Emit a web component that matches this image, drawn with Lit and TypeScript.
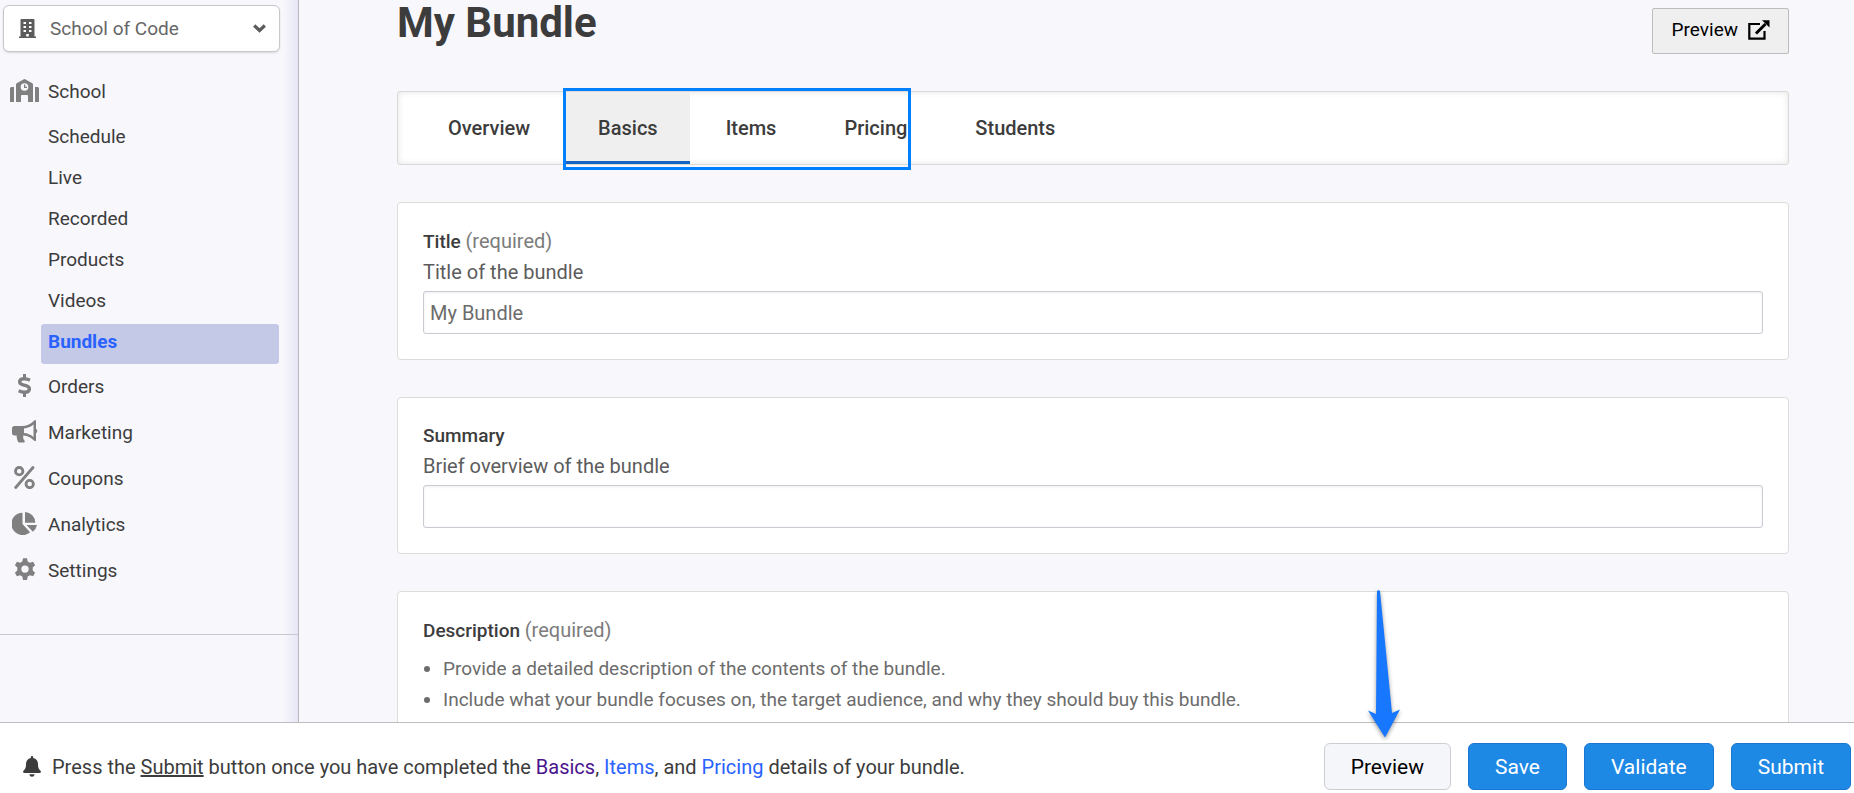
import { LitElement, html, css, svg, nothing } from "lit";
import { customElement, state } from "lit/decorators.js";
import { classMap } from "lit/directives/class-map.js";

const icons = {
  school: svg`<svg class="glyph" width="29" height="23" viewBox="0 0 29 23" fill="currentColor" aria-hidden="true">
    <path fill-rule="evenodd" d="M0 9.5Q0 8 1.500 8H4V23H0ZM25 8h2.500Q29 8 29 9.500V23H25ZM6 5.500Q6 4.800 6.700 4.300L13.400.4q1.100-.6 2.200 0L22.300 4.300q.7.500.7 1.200V23H18v-6q0-1-1-1h-5q-1 0-1 1v6H6ZM14.500 4.200a3.800 3.800 0 1 0 0 7.600 3.800 3.800 0 0 0 0-7.600ZM14 5.500h1.300v2.200H17V9H14Z"/></svg>`,
  dollar: svg`<svg class="glyph" width="15" height="23" viewBox="0 0 15 23" fill="none" stroke="currentColor" stroke-width="3.400" aria-hidden="true">
    <path d="M7.500 0v4M7.500 18.500V23" stroke-width="3"/><path d="M13 6.200C11 5.200 9.200 4.700 7.200 4.700 1.600 4.700 1.200 9.600 6 10.800l3 .8c5 1.400 4.300 6.600-1.300 6.700-2.200 0-4.200-.7-6-1.600"/></svg>`,
  bullhorn: svg`<svg class="glyph" width="26" height="23" viewBox="0 0 26 23" fill="currentColor" aria-hidden="true">
    <path fill-rule="evenodd" d="M22.500.2q1.500-.6 1.500 1V8.700a2.700 2.700 0 0 1 0 4.600V20q0 1.600-1.500 1C19 17.500 16 15.700 11.300 15.500c-.4 2.500.2 3.900 1.300 5.300.5.800-.1 1.700-1 1.700H7.200q-.9 0-1.300-.9C5 19.500 4.500 17.500 4.700 15.500H2.500Q0 15.500 0 13V8.500Q0 6 2.500 6H9.500C15 6 19 4 22.500.2ZM21.500 4.500C18.500 7 15.500 8.200 12 8.500v4.600c3.500.2 6.500 1.500 9.500 3.900Z"/></svg>`,
  percent: svg`<svg class="glyph" width="21" height="23" viewBox="0 0 21 23" fill="none" stroke="currentColor" stroke-width="2.800" stroke-linecap="round" aria-hidden="true">
    <path d="M19 1.500 1.700 21.500"/><circle cx="5.200" cy="5.200" r="3.700"/><circle cx="15.700" cy="18" r="3.700"/></svg>`,
  pie: svg`<svg class="glyph" width="26" height="23" viewBox="0 0 26 23" fill="currentColor" aria-hidden="true">
    <path d="M10.500.7V12l7.600 8.200A11.200 11.200 0 1 1 10.500.7ZM13 0A10.800 10.800 0 0 1 23.300 10.800H13ZM14.500 13H25a10.500 10.500 0 0 1-4.200 6.700Z"/></svg>`,
  gear: svg`<svg class="glyph" width="22" height="23" viewBox="0 0 22 23" fill="currentColor" aria-hidden="true">
    <path fill-rule="evenodd" d="M9 .3h4l.7 3.200 2.200 1.300 3.200-1.100 2 3.500-2.400 2.200v3.200l2.400 2.200-2 3.500-3.200-1.100-2.200 1.300-.7 3.500H9l-.7-3.500-2.200-1.300-3.200 1.100-2-3.500 2.400-2.200V9.400L.9 7.200l2-3.500 3.200 1.100 2.200-1.300ZM11 7.400a3.700 3.700 0 1 0 0 7.400 3.700 3.700 0 0 0 0-7.400Z"/></svg>`,
  building: svg`<svg width="17" height="19" viewBox="0 0 17 19" fill="currentColor" aria-hidden="true">
    <path fill-rule="evenodd" d="M1.500 1Q1.500 0 2.500 0h12q1 0 1 1V17.500H17V19H0V17.500H1.500ZM4.500 3v2h2.500V3ZM10 3v2h2.500V3ZM4.500 7v2h2.500V7ZM10 7v2h2.500V7ZM4.500 11v2h2.500v-2ZM10 11v2h2.500v-2ZM7.200 15v2.500h2.600V15Z"/></svg>`,
  chevron: svg`<svg width="13" height="9" viewBox="0 0 13 9" fill="none" stroke="currentColor" stroke-width="3.200" aria-hidden="true">
    <path d="M1.200 1.500 6.500 6.500 11.800 1.500"/></svg>`,
  external: svg`<svg width="22" height="20" viewBox="0 0 22 20" fill="none" stroke="currentColor" stroke-width="2.200" aria-hidden="true">
    <path d="M12 4H1.300V18.600H16.500V11"/><path d="M8 13.500 17.500 4" stroke-width="3"/><path d="M14 .3h7.500v7.200Z" fill="currentColor" stroke="none"/></svg>`,
  bell: svg`<svg width="18" height="21" viewBox="0 0 18 21" fill="currentColor" aria-hidden="true">
    <path d="M9 0q1.200 0 1.200 1.200v.7C13.500 2.500 15 5 15 8c0 4 .9 5.200 2.500 6.800.9.900.4 2.200-.8 2.200H1.300C.1 17-.4 15.700.5 14.800 2.100 13.200 3 12 3 8c0-3 1.500-5.500 4.800-6.100v-.7Q7.800 0 9 0ZM6.300 18.200h5.400Q11.300 20.700 9 20.700T6.300 18.200Z"/></svg>`,
};

const subItems = ["Schedule", "Live", "Recorded", "Products", "Videos", "Bundles"];
const sections: [string, unknown][] = [
  ["Orders", icons.dollar],
  ["Marketing", icons.bullhorn],
  ["Coupons", icons.percent],
  ["Analytics", icons.pie],
  ["Settings", icons.gear],
];

@customElement("side-nav")
export class SideNav extends LitElement {
  static styles = css`
    :host {
      display: block;
      box-sizing: border-box;
      border-right: 1px solid #b8b8bc;
      background: linear-gradient(to left, #e6e6f6, #f8f7fc 15px);
      color: #3c3c3c;
    }
    .account {
      display: flex;
      align-items: center;
      box-sizing: border-box;
      height: 47px;
      margin: 5px 18px 17px 3px;
      padding: 0 13px 0 15px;
      gap: 14px;
      border: 1px solid #c8c8cc;
      border-radius: 6px;
      background: #fff;
      color: #5c5c5c;
      box-shadow: 0 1px 2px #0002;
    }
    .account select {
      flex: 1;
      min-width: 0;
      appearance: none;
      border: 0;
      padding: 0;
      background: none;
      font: inherit;
      line-height: 24px;
      color: #666;
    }
    .row, .sub {
      display: flex;
      box-sizing: border-box;
      color: inherit;
      text-decoration: none;
    }
    .row { align-items: center; height: 46px; padding-left: 8px; gap: 7px; }
    .slot { display: flex; justify-content: center; width: 33px; padding-bottom: 4px; color: #808080; }
    .subs { display: grid; gap: 1px; margin: 4px 19px 0 41px; }
    .sub { align-items: center; height: 40px; padding: 0 7px 4px; border-radius: 3px; }
    .active { background: #c5c9e8; color: #2962ff; font-weight: 700; }
    .rule { border: 0; border-top: 1px solid #c8c8d0; margin: 40px 0 0; }
  `;

  private row(name: string, icon: unknown) {
    return html`<a class="row" href="#${name.toLowerCase()}"><span class="slot">${icon}</span>${name}</a>`;
  }

  render() {
    return html`
      <div class="account">
        ${icons.building}
        <select aria-label="Account"><option>School of Code</option></select>
        ${icons.chevron}
      </div>
      <nav>
        ${this.row("School", icons.school)}
        <div class="subs">
          ${subItems.map((name) => html`<a class=${classMap({ sub: true, active: name === "Bundles" })} href="#${name.toLowerCase()}">${name}</a>`)}
        </div>
        ${sections.map(([name, icon]) => this.row(name, icon))}
      </nav>
      <hr class="rule" />
    `;
  }
}

@customElement("app-root")
export class AppRoot extends LitElement {
  @state() private tab = "Basics";

  static styles = css`
    :host {
      display: grid;
      grid-template-rows: minmax(0, 1fr) auto;
      height: 100vh;
      overflow: hidden;
      background: #f8f7fc;
      color: #3c3c3c;
      font: 400 19px/30px Roboto, sans-serif;
    }
    button, input { font: inherit; }
    .body { display: grid; grid-template-columns: 299px minmax(0, 1fr); overflow: hidden; }
    .main { display: flex; flex-direction: column; padding: 0 65px 0 98px; gap: 37px; overflow: hidden; }
    .head { display: flex; justify-content: space-between; align-items: flex-end; flex: none; height: 54px; }
    .title { margin: 0; align-self: flex-start; font-size: 42px; line-height: 46px; font-weight: 700; }
    .open {
      display: flex;
      align-items: center;
      box-sizing: border-box;
      height: 46px;
      gap: 10px;
      padding: 0 18px 2px 19px;
      border: 1px solid #bcbcbc;
      border-radius: 2px;
      background: #efefef;
      color: #000;
    }
    .tabs {
      position: relative;
      display: flex;
      box-sizing: border-box;
      flex: none;
      height: 74px;
      padding: 0 18px;
      gap: 4px;
      border: 1px solid #d9dad6;
      border-radius: 3px;
      background: #fff;
      box-shadow: inset 0 0 6px #0000001c;
    }
    .tab {
      padding: 3px 32px 0;
      border: 0;
      border-bottom: 3px solid transparent;
      background: none;
      color: inherit;
      font-size: 20px;
      font-weight: 500;
    }
    .tab.active { background: #efefef; border-color: #1565c0; }
    .marker {
      position: absolute;
      left: 165px;
      top: -4px;
      box-sizing: border-box;
      width: 348px;
      height: 82px;
      border: 3px solid #0080ff;
      pointer-events: none;
    }
    .card {
      display: flex;
      flex-direction: column;
      flex: none;
      padding: 23px 25px 25px;
      border: 1px solid #dcdcd8;
      border-radius: 4px;
      background: #fff;
    }
    .label { font-weight: 500; }
    .req { font-size: 20px; font-weight: 400; color: #7c7c7c; }
    .hint { font-size: 20px; color: #5c5c5c; }
    .field {
      box-sizing: border-box;
      width: 100%;
      height: 43px;
      margin-top: 4px;
      padding: 0 6px;
      border: 1px solid #c9cbd3;
      border-radius: 3px;
      background: #fff;
      box-shadow: inset 0 1px 3px #0001;
      color: #6c6c6c;
      font-size: 20px;
    }
    .notes { margin: 7px 0 0; padding-left: 20px; line-height: 31px; color: #6c6c6c; }
    .foot {
      position: relative;
      display: flex;
      align-items: center;
      gap: 17px;
      padding: 20px 3px 3px 23px;
      border-top: 1px solid #bcbcbc;
      background: #fff;
      font-size: 20px;
    }
    .msg { display: flex; align-items: center; flex: 1; gap: 11px; }
    .link { color: #2962ff; text-decoration: none; }
    .visited { color: #4a148c; }
    .act {
      height: 47px;
      padding: 0 26px;
      border: 1px solid #1976d2;
      border-radius: 6px;
      background: #1e88e5;
      color: #fff;
      font-size: 21px;
    }
    .act.plain { background: #f5f6fa; border-color: #ccced4; color: #000; }
    .spot { position: relative; display: flex; }
    .arrow { position: absolute; left: 43px; bottom: 52px; overflow: visible; filter: drop-shadow(0 2px 2px #0006); pointer-events: none; }
  `;

  private field(id: string, label: string, required: boolean, hint: string, value: string) {
    return html`
      <section class="card">
        <label class="label" for=${id}>${label}${required ? html` <span class="req">(required)</span>` : nothing}</label>
        <span class="hint" id="${id}-hint">${hint}</span>
        <input class="field" id=${id} type="text" aria-describedby="${id}-hint" .value=${value} />
      </section>
    `;
  }

  render() {
    return html`
      <div class="body">
        <side-nav></side-nav>
        <main class="main">
          <header class="head">
            <h1 class="title">My Bundle</h1>
            <button class="open" type="button">Preview ${icons.external}</button>
          </header>
          <div class="tabs" role="tablist">
            ${["Overview", "Basics", "Items", "Pricing", "Students"].map(
              (name) => html`<button
                type="button"
                role="tab"
                aria-selected=${name === this.tab}
                class=${classMap({ tab: true, active: name === this.tab })}
                @click=${() => (this.tab = name)}
              >${name}</button>`
            )}
            <div class="marker"></div>
          </div>
          ${this.field("title", "Title", true, "Title of the bundle", "My Bundle")}
          ${this.field("summary", "Summary", false, "Brief overview of the bundle", "")}
          <section class="card">
            <span class="label">Description <span class="req">(required)</span></span>
            <ul class="notes">
              <li>Provide a detailed description of the contents of the bundle.</li>
              <li>Include what your bundle focuses on, the target audience, and why they should buy this bundle.</li>
            </ul>
          </section>
        </main>
      </div>
      <footer class="foot">
        <div class="msg">
          ${icons.bell}
          <span>Press the <u>Submit</u> button once you have completed the
            <a class="link visited" href="#basics">Basics</a>, <a class="link" href="#items">Items</a>, and
            <a class="link" href="#pricing">Pricing</a> details of your bundle.</span>
        </div>
        <div class="spot">
          <button class="act plain" type="button">Preview</button>
          <svg class="arrow" width="34" height="148" viewBox="0 0 34 148" fill="#1877ff" aria-hidden="true">
            <path d="M10 1q1.500-1.500 3 0L25 123l8-3.500L18 147.500 1 120.500 9 124Z" />
          </svg>
        </div>
        <button class="act" type="button">Save</button>
        <button class="act" type="button">Validate</button>
        <button class="act" type="button">Submit</button>
      </footer>
    `;
  }
}
